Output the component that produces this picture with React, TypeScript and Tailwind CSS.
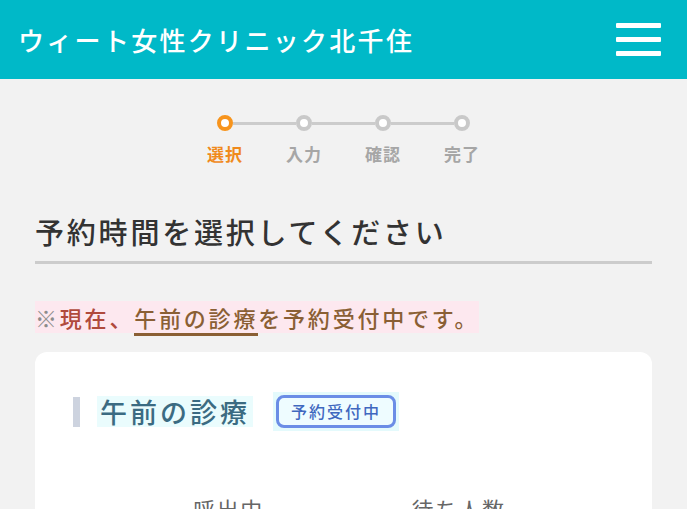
const JP = "font-['Noto_Sans_CJK_JP','Noto_Sans',sans-serif]";

const steps = ["選択", "入力", "確認", "完了"];

function Stepper() {
  return (
    <div className="flex flex-col items-center">
      <div className="flex items-center">
        {steps.map((s, i) => (
          <div key={s} className="flex items-center">
            {i > 0 && <div className="h-[3px] w-[63px] bg-[#cccccc]" />}
            <div
              className={`h-4 w-4 rounded-full border-4 bg-white ${
                i === 0 ? "border-[#f7941d]" : "border-[#c9c9c9]"
              }`}
            />
          </div>
        ))}
      </div>
      <div className="mt-[13px] flex">
        {steps.map((s, i) => (
          <div
            key={s}
            className={`w-[79px] text-center text-[17px] leading-[20px] font-bold tracking-[1px] ${
              i === 0 ? "text-[#f08a1c]" : "text-[#a6a6a6]"
            }`}
          >
            {s}
          </div>
        ))}
      </div>
    </div>
  );
}

export default function App() {
  return (
    <div className={`${JP} h-[509px] w-[687px] overflow-hidden bg-[#f2f2f2]`}>
      <header className="flex h-[79px] items-center justify-between bg-[#00b9c8] pl-[18px] pr-[26px]">
        <h1 className="text-[26px] leading-none font-medium tracking-[2.3px] text-white">
          ウィート女性クリニック北千住
        </h1>
        <button type="button" className="flex w-[45px] flex-col gap-[9px]">
          <span className="h-[5px] w-full rounded-[1px] bg-white" />
          <span className="h-[5px] w-full rounded-[1px] bg-white" />
          <span className="h-[5px] w-full rounded-[1px] bg-white" />
        </button>
      </header>

      <main className="px-[35px] pt-[36px]">
        <Stepper />

        <h2 className="mt-[48px] border-b-[3px] border-[#cccccc] pb-[11px] text-[29px] leading-[38px] font-medium tracking-[2.8px] text-[#333333]">
          予約時間を選択してください
        </h2>

        <p className="mt-[38px] text-[22px] leading-[31px] font-medium tracking-[2.8px] text-[#b04a3c]">
          <span className="bg-[#fde8ef] text-[#8c8c8c]">※</span>
          <span className="bg-[#fde8ef]">現在、</span>
          <span className="border-b-[3px] border-[#8a5f34] bg-[#fde8ef] text-[#8a5f34]">
            午前の診療
          </span>
          <span className="bg-[#fde8ef] text-[#8a5f34]">を予約受付中です。</span>
        </p>

        <section className="mt-[19px] h-[300px] rounded-[12px] bg-white px-[38px] pt-[40px]">
          <div className="flex items-center">
            <div className="h-[30px] w-[7px] bg-[#cdd3df]" />
            <div className="ml-[17px] bg-[#eafcfd] px-[3px] text-[27px] leading-[31px] font-medium tracking-[3px] text-[#3b6b82]">
              午前の診療
            </div>
            <div className="ml-[20px] bg-[#e4fafc] p-[3px]">
              <div className="rounded-[8px] border-[3px] border-[#6b8de6] bg-[#eefcff] px-[12px] text-[16px] leading-[27px] font-medium tracking-[2px] text-[#3f68bf]">
                予約受付中
              </div>
            </div>
          </div>

          <div className="mt-[62px] flex justify-center">
            <div className="w-[230px] text-center text-[22px] leading-[30px] tracking-[1.5px] text-[#666666]">
              呼出中
            </div>
            <div className="w-[230px] text-center text-[22px] leading-[30px] tracking-[1.5px] text-[#666666]">
              待ち人数
            </div>
          </div>
        </section>
      </main>
    </div>
  );
}
